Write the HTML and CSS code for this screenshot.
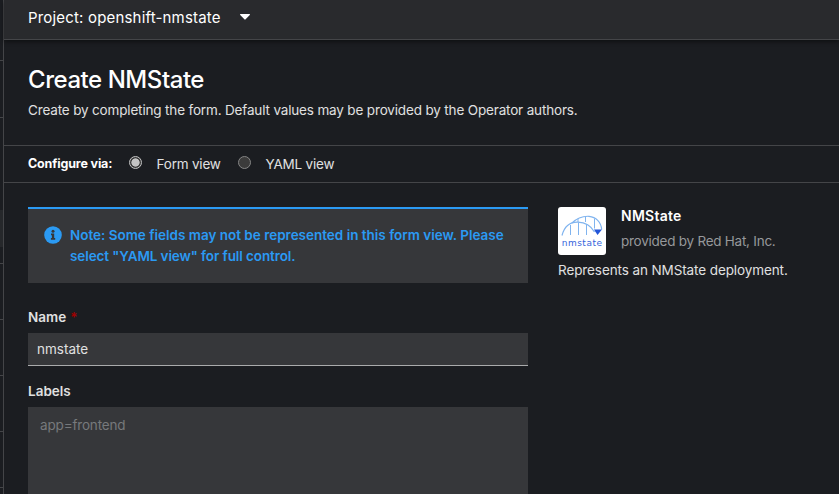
FILE: index.html
```html
<!DOCTYPE html>
<html lang="en">
<head>
<meta charset="utf-8">
<title>Create NMState</title>
<link rel="stylesheet" href="styles.css">
</head>
<body>
<div class="shell">
  <nav class="rail">
    <div class="rail-item rail-first"></div>
    <div class="rail-item rail-second"></div>
    <div class="rail-gap"></div>
    <div class="rail-current"></div>
    <div class="rail-item rail-after"></div>
    <div class="rail-item"></div>
    <div class="rail-item"></div>
    <div class="rail-item"></div>
    <div class="rail-item"></div>
  </nav>
  <main class="page">
    <header class="project-bar">
      <span class="project-name">Project: openshift-nmstate</span>
      <svg class="caret" viewBox="0 0 10 6" width="10" height="6"><path d="M.6 0h8.8c.6 0 .8.6.4 1L5.6 5.3a.8.8 0 0 1-1.2 0L.2 1C-.2.6 0 0 .6 0z" fill="#fff"/></svg>
    </header>
    <section class="heading">
      <h1>Create NMState</h1>
      <p>Create by completing the form. Default values may be provided by the Operator authors.</p>
    </section>
    <section class="switcher">
      <span class="switcher-label">Configure via:</span>
      <i class="radio radio-on"></i><span class="opt opt-form">Form view</span>
      <i class="radio"></i><span class="opt">YAML view</span>
    </section>
    <section class="content">
      <form class="form">
        <div class="alert">
          <svg class="info" viewBox="0 0 18 18" width="18" height="18"><circle cx="9" cy="9" r="8.8" fill="#2b9af3"/><circle cx="9" cy="5.2" r="1.5" fill="#36373a"/><path d="M7 7.6h3.2v4.5h1v1.6H6.900v-1.600h1V9.200H7z" fill="#36373a"/></svg>
          <p class="alert-text">Note: Some fields may not be represented in this form view. Please<br><span class="alert-end">select "YAML view" for full control.</span></p>
        </div>
        <div class="label label-name">Name<b class="required">*</b></div>
        <div class="input">nmstate</div>
        <div class="label label-labels">Labels</div>
        <div class="tags">app=frontend</div>
      </form>
      <aside class="operator">
        <div class="operator-head">
          <div class="logo">
            <svg viewBox="0 0 48 48" width="48" height="48">
              <g fill="none" stroke="#80b4ef" stroke-width="1.2">
                <path d="M4 28.500C6.500 19 13 15 20 15.200C28 15.500 33 19 36.500 25"/>
                <path d="M14 16C19 11 25 9 31 9.300C38 10 43 15 43.700 22.500"/>
                <path d="M12.500 18V28M20.500 15.500V28M28.500 17.500V28M20 11.500V15M27.500 9.500V15M36.500 11.500V21.500" stroke-width="1"/>
              </g>
              <path d="M36 22.500h8L39.500 28z" fill="#2356d8"/>
              <text class="logo-text" x="3.700" y="38.500" fill="#3564dc">nmstate</text>
            </svg>
          </div>
          <div>
            <h2>NMState</h2>
            <div class="provider">provided by Red Hat, Inc.</div>
          </div>
        </div>
        <p class="summary">Represents an NMState deployment.</p>
      </aside>
    </section>
  </main>
</div>
</body>
</html>
```
FILE: styles.css
```css
* { box-sizing: border-box; }
body { margin: 0; background: #1b1d21; color: #e0e0e0; font: 13.5px/21px Inter, "Open Sans", sans-serif; overflow: hidden; }
h1, h2, p { margin: 0; }
.shell { display: flex; height: 494px; overflow: hidden; }
.rail { width: 4px; flex: none; border-right: 1px solid #444548; }
.rail-item { height: 56px; border-bottom: 1px solid #444548; }
.rail-first { height: 61px; }
.rail-second { height: 57px; }
.rail-gap { height: 92px; }
.rail-current { height: 37px; background: #26282b; }
.rail-after { height: 17px; }
.page { flex: 1; min-width: 0; }
.project-bar { height: 40px; padding: 0 24px 5px; display: flex; align-items: center; background: #292a2d; border-bottom: 1px solid #444548; box-shadow: 0 2px 4px rgba(0,0,0,.45); color: #fff; font-size: 15px; letter-spacing: .18px; }
.project-name { width: 212px; }
.heading { height: 106px; padding: 23px 24px 0; border-bottom: 1px solid #444548; }
h1 { color: #fff; font-size: 24px; line-height: 33px; font-weight: 500; letter-spacing: -.45px; }
.heading p { margin-top: 4px; letter-spacing: -.16px; }
.switcher { height: 37px; padding: 0 24px; display: flex; align-items: center; border-bottom: 1px solid #444548; }
.switcher-label { width: 101px; padding-bottom: 1px; color: #fff; font-weight: 700; font-size: 12.5px; letter-spacing: -.15px; }
.radio { width: 13px; height: 13px; margin-bottom: 3px; flex: none; border: 1px solid #858585; border-radius: 50%; background: #3b3b3b; }
.radio-on { border-color: #c4c4c4; background: radial-gradient(circle, #c4c4c4 0 3.8px, #3b3b3b 4.4px); }
.opt { margin-left: 14.5px; letter-spacing: -.2px; }
.opt-form { width: 81.5px; }
.content { display: flex; gap: 30px; padding: 24px 24px 0; }
.form { width: 500px; flex: none; }
.alert { height: 76px; display: flex; gap: 8px; padding: 16px 16px 0; background: #36373a; border-top: 2px solid #2b9af3; color: #2b9af3; font-weight: 600; }
.info { flex: none; margin-top: 1px; }
.alert-text { white-space: nowrap; letter-spacing: -.01px; }
.alert-end { letter-spacing: -.1px; }
.label { font-weight: 600; height: 21px; }
.label-name { margin-top: 24px; display: flex; gap: 4px; }
.required { color: #a30000; font-weight: 600; }
.input { margin-top: 5px; height: 33px; padding: 6px 9px; background: #36373a; border-bottom: 1px solid #aaabac; }
.label-labels { margin-top: 15px; }
.tags { margin-top: 5px; height: 100px; padding: 8px 12px; background: #36373a; color: #77797c; letter-spacing: -.16px; }
.operator-head { display: flex; gap: 15px; height: 53px; }
.logo { width: 48px; height: 48px; background: #fff; border-radius: 3px; }
.logo svg { display: block; }
.logo-text { font: 9px "DejaVu Sans", sans-serif; letter-spacing: .5px; }
h2 { margin-top: -2px; font-size: 14px; line-height: 21px; font-weight: 600; color: #fff; letter-spacing: .25px; }
.provider { margin-top: 5px; color: #96989b; letter-spacing: -.25px; }
.summary { white-space: nowrap; letter-spacing: -.1px; }
```
